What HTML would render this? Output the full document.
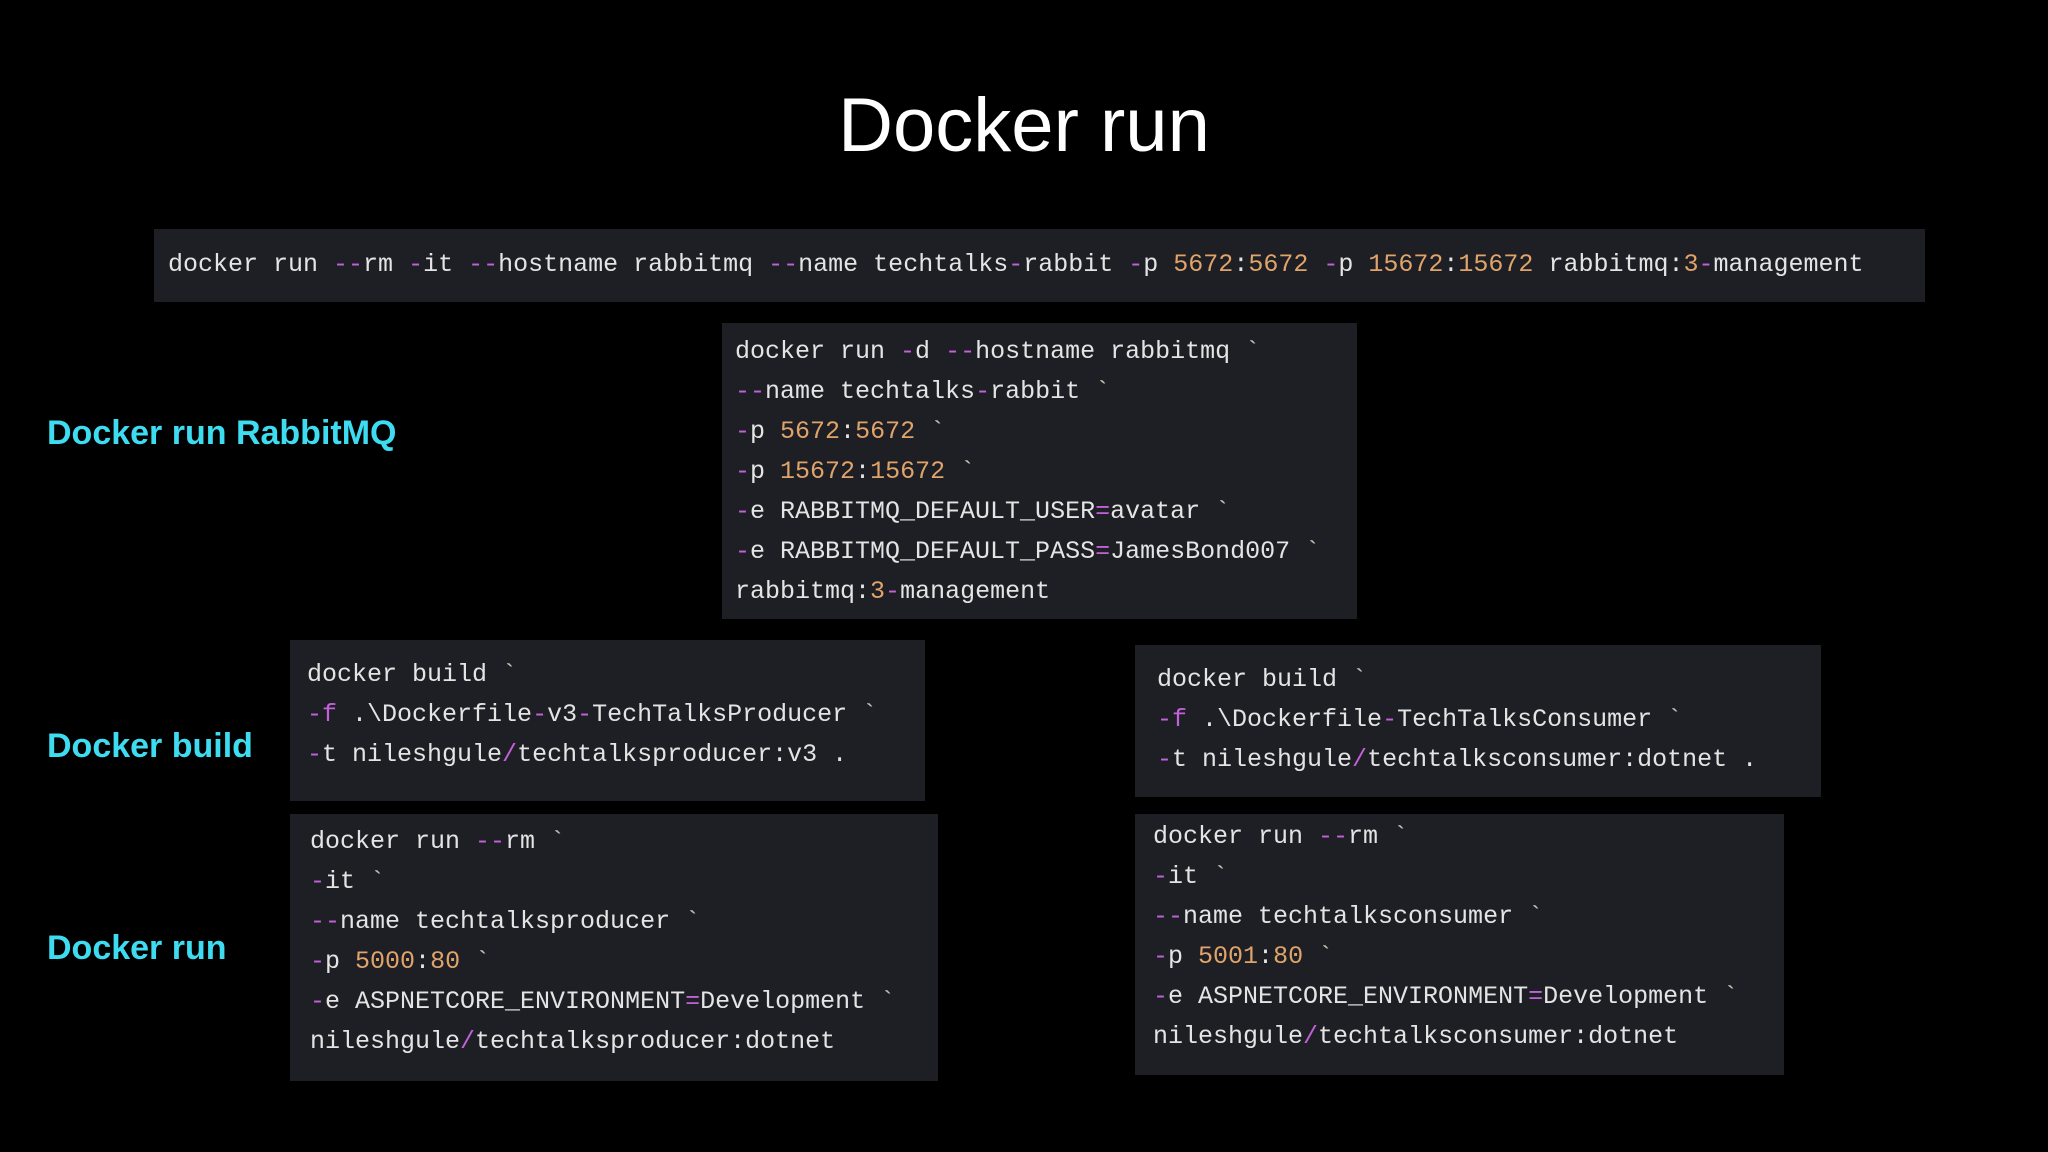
<!DOCTYPE html>
<html><head><meta charset="utf-8"><style>
html,body{margin:0;padding:0;background:#000;}
body{width:2048px;height:1152px;position:relative;overflow:hidden;font-family:"Liberation Sans",sans-serif;}
.t{position:absolute;left:0;width:2048px;text-align:center;top:82px;font-size:76px;color:#fff;font-weight:500;}
.b{position:absolute;background:#1e1e25;}
.l{position:absolute;font-family:"Liberation Mono",monospace;font-size:25px;color:#e4e4e4;white-space:pre;line-height:40px;}
.p{color:#c261d9}.o{color:#e0a46a}.k{color:#c8c0b0}
.h{position:absolute;color:#3ddcf0;font-weight:bold;font-size:34px;}
</style></head><body>
<div class="t">Docker run</div>

<div class="b" style="left:154px;top:229px;width:1771px;height:73px"></div>
<div class="l" style="left:168px;top:245px">docker run <span class="p">--</span>rm <span class="p">-</span>it <span class="p">--</span>hostname rabbitmq <span class="p">--</span>name techtalks<span class="p">-</span>rabbit <span class="p">-</span>p <span class="o">5672</span>:<span class="o">5672</span> <span class="p">-</span>p <span class="o">15672</span>:<span class="o">15672</span> rabbitmq:<span class="o">3</span><span class="p">-</span>management</div>

<div class="b" style="left:722px;top:323px;width:635px;height:296px"></div>
<div class="l" style="left:735px;top:332px">docker run <span class="p">-</span>d <span class="p">--</span>hostname rabbitmq <span class="k">`</span>
<span class="p">--</span>name techtalks<span class="p">-</span>rabbit <span class="k">`</span>
<span class="p">-</span>p <span class="o">5672</span>:<span class="o">5672</span> <span class="k">`</span>
<span class="p">-</span>p <span class="o">15672</span>:<span class="o">15672</span> <span class="k">`</span>
<span class="p">-</span>e RABBITMQ_DEFAULT_USER<span class="p">=</span>avatar <span class="k">`</span>
<span class="p">-</span>e RABBITMQ_DEFAULT_PASS<span class="p">=</span>JamesBond007 <span class="k">`</span>
rabbitmq:<span class="o">3</span><span class="p">-</span>management</div>

<div class="h" style="left:47px;top:414px">Docker run RabbitMQ</div>
<div class="h" style="left:47px;top:727px">Docker build</div>
<div class="h" style="left:47px;top:929px">Docker run</div>

<div class="b" style="left:290px;top:640px;width:635px;height:161px"></div>
<div class="l" style="left:307px;top:655px">docker build <span class="k">`</span>
<span class="p">-f</span> .\Dockerfile<span class="p">-</span>v3<span class="p">-</span>TechTalksProducer <span class="k">`</span>
<span class="p">-</span>t nileshgule<span class="p">/</span>techtalksproducer:v3 .</div>

<div class="b" style="left:1135px;top:645px;width:686px;height:152px"></div>
<div class="l" style="left:1157px;top:660px">docker build <span class="k">`</span>
<span class="p">-f</span> .\Dockerfile<span class="p">-</span>TechTalksConsumer <span class="k">`</span>
<span class="p">-</span>t nileshgule<span class="p">/</span>techtalksconsumer:dotnet .</div>

<div class="b" style="left:290px;top:814px;width:648px;height:267px"></div>
<div class="l" style="left:310px;top:822px">docker run <span class="p">--</span>rm <span class="k">`</span>
<span class="p">-</span>it <span class="k">`</span>
<span class="p">--</span>name techtalksproducer <span class="k">`</span>
<span class="p">-</span>p <span class="o">5000</span>:<span class="o">80</span> <span class="k">`</span>
<span class="p">-</span>e ASPNETCORE_ENVIRONMENT<span class="p">=</span>Development <span class="k">`</span>
nileshgule<span class="p">/</span>techtalksproducer:dotnet</div>

<div class="b" style="left:1135px;top:814px;width:649px;height:261px"></div>
<div class="l" style="left:1153px;top:817px">docker run <span class="p">--</span>rm <span class="k">`</span>
<span class="p">-</span>it <span class="k">`</span>
<span class="p">--</span>name techtalksconsumer <span class="k">`</span>
<span class="p">-</span>p <span class="o">5001</span>:<span class="o">80</span> <span class="k">`</span>
<span class="p">-</span>e ASPNETCORE_ENVIRONMENT<span class="p">=</span>Development <span class="k">`</span>
nileshgule<span class="p">/</span>techtalksconsumer:dotnet</div>
</body></html>
